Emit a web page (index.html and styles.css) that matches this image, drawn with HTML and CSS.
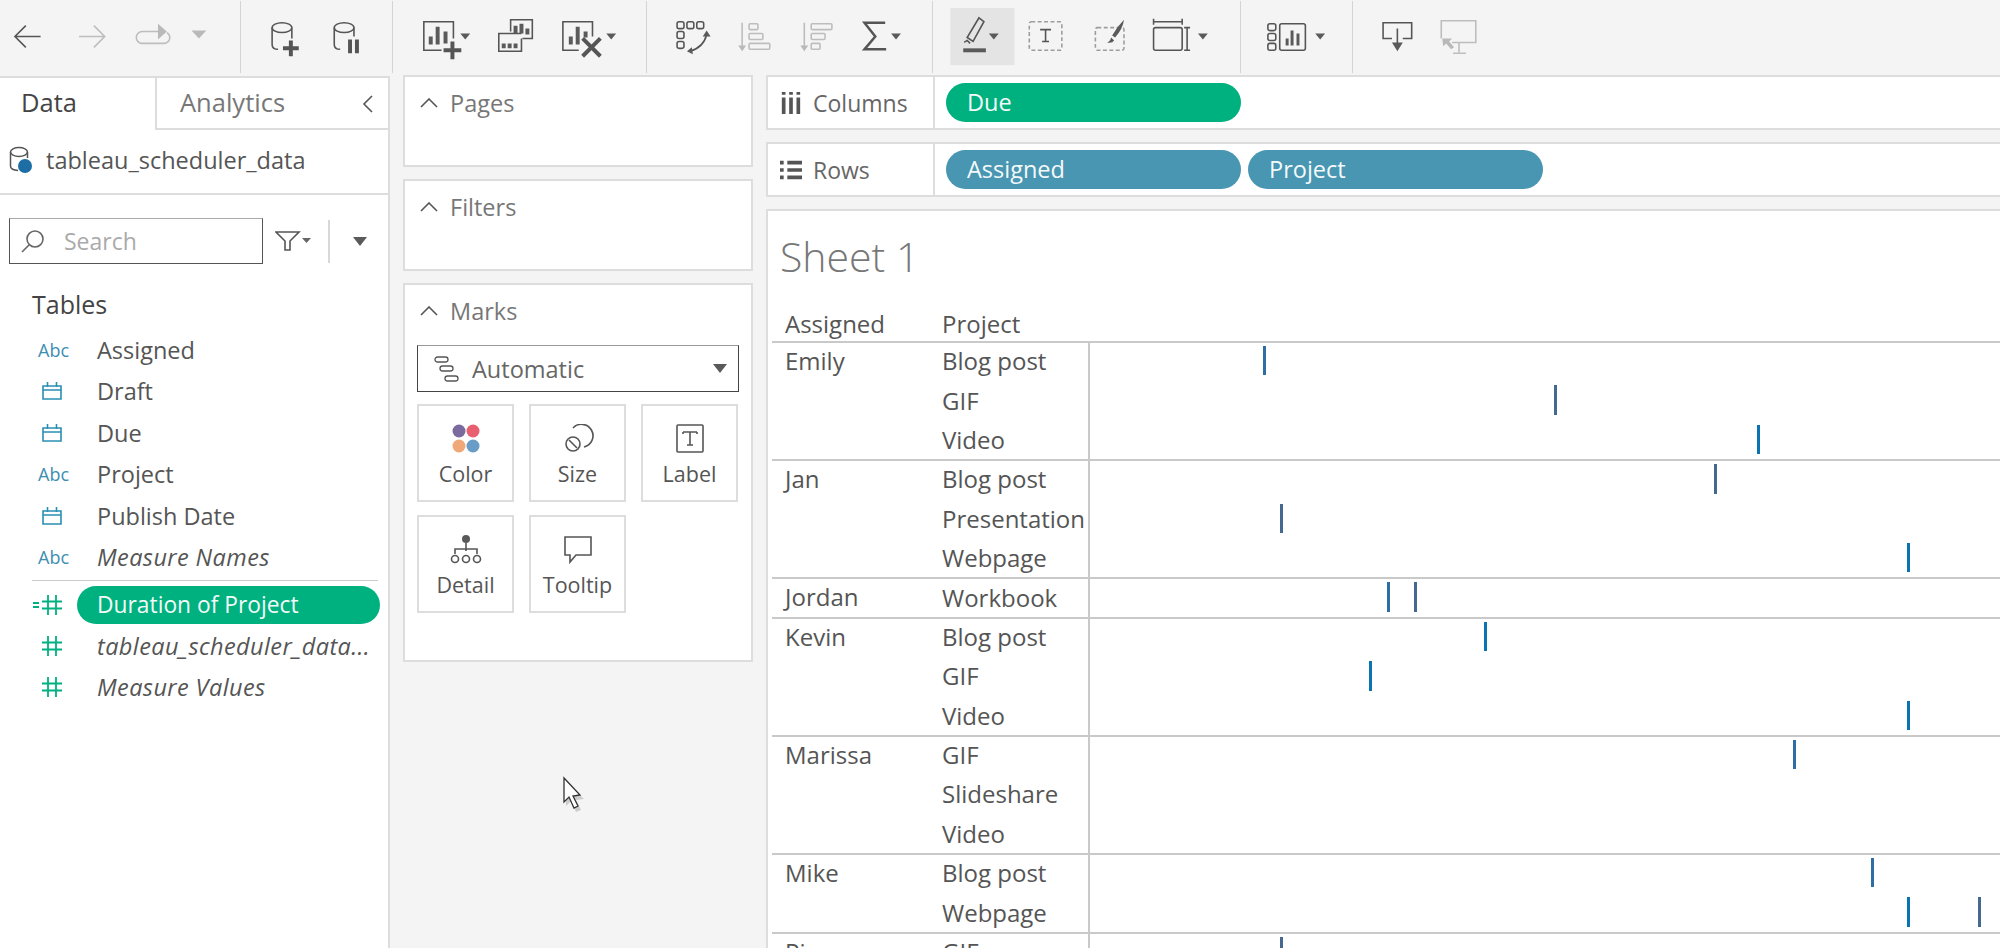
FILE: index.html
```html
<!DOCTYPE html>
<html lang="en">
<head>
  <meta charset="UTF-8">
  <title>Tableau - Sheet 1</title>
  <link rel="stylesheet" href="styles.css">
</head>
<body>

<div class="toolbar">
  <svg class="tb-group tb-history" viewBox="0 0 241 73">
    <g class="ln-dark"><path d="M40 36H15M25 25 14 36 25 47"/></g>
    <g class="ln-off"><path d="M79 36H104M94 25 105 36 94 47"/><path d="M160 31H143a6 6 0 0 0 0 12h22a6 6 0 0 0 6-6 6 6 0 0 0-3-5"/></g>
    <path class="fl-off" d="M159 23 168 31 159 39ZM193 30H208L200.500 38Z"/>
  </svg>
  <svg class="tb-group tb-data" viewBox="241 0 152 73">
    <g class="ln-dark">
      <ellipse cx="282" cy="27" rx="10" ry="5"/>
      <path d="M272 27V44Q272 49 278 49M292 27V38"/>
      <ellipse cx="345" cy="27" rx="10" ry="5"/>
      <path d="M335 27V44Q335 49 341 49M355 27V36"/>
    </g>
    <path class="ln-heavy" d="M291 40V56M283 48H299M351 39V53M358 39V53"/>
  </svg>
  <svg class="tb-group tb-sheet" viewBox="393 0 254 73">
    <g class="ln-dark">
      <path d="M441 50H423V21H453V38"/>
      <path d="M511 31V19H533V38H523"/>
      <path d="M522 33H499V51H522V38"/>
      <path d="M580 50H564V21H594V36"/>
    </g>
    <path class="fl-dark" d="M428 36h4v8h-4ZM435 26h4v18h-4ZM443 31h4v12h-4ZM514 25h4v8h-4ZM520 23h4v10h-4ZM526 28h4v6h-4ZM502 43h4v5h-4ZM508 43h4v5h-4ZM514 43h4v5h-4ZM570 36h4v8h-4ZM577 26h4v18h-4ZM585 31h4v6h-4Z"/>
    <path class="ln-heavy" d="M452 41V59M443 50H461M584 38 602 56M602 38 584 56"/>
    <path class="fl-dark" d="M460 33H470L465 39ZM608 33H618L613 39Z"/>
  </svg>
  <svg class="tb-group tb-analyze" viewBox="647 0 286 73">
    <g class="ln-dark">
      <rect x="676" y="21" width="7" height="7" rx="2"/><rect x="686" y="21" width="7" height="7" rx="2"/><rect x="696" y="21" width="7" height="7" rx="2"/>
      <rect x="676" y="31" width="7" height="7" rx="2"/><rect x="676" y="41" width="7" height="7" rx="2"/>
      <path d="M706 34Q703 47 689 51"/>
    </g>
    <path class="fl-dark" d="M702 36 706 30 710 36ZM691 47 686 51 692 54Z"/>
    <g class="ln-off">
      <path d="M742 22V46M805 22V46"/>
      <rect x="749" y="23" width="9" height="6" rx="1"/><rect x="749" y="33" width="14" height="6" rx="1"/><rect x="749" y="43" width="21" height="6" rx="1"/>
      <rect x="812" y="23" width="21" height="6" rx="1"/><rect x="812" y="33" width="14" height="6" rx="1"/><rect x="812" y="43" width="9" height="6" rx="1"/>
    </g>
    <path class="fl-off" d="M738 45H746L742 51ZM801 45H809L805 51Z"/>
    <path class="ln-sigma" d="M887 22H866L877 36 866 49H888"/>
    <path class="fl-dark" d="M893 33H903L898 39Z"/>
  </svg>
  <svg class="tb-group tb-format" viewBox="933 0 308 73">
    <rect class="fl-active" x="949" y="7" width="65" height="58"/>
    <g class="ln-dark">
      <path d="M978 17 983 21 972 41 966 37Z"/>
      <path d="M963 42 966 40 969 43"/>
      <path d="M1155 21H1184M1155 18V24M1184 18V24"/>
      <rect x="1155" y="27" width="29" height="23" rx="2"/>
      <path d="M1189 27V50M1186 27H1192M1186 50H1192"/>
      <path d="M1040 29H1051M1045.500 29V41M1042 41H1049"/>
    </g>
    <rect class="fl-dark" x="962" y="48" width="23" height="4"/>
    <rect class="ln-dash" x="1029" y="21" width="33" height="29" rx="2"/>
    <rect class="ln-dash" x="1096" y="27" width="29" height="23" rx="2"/>
    <path class="fl-dark" d="M1125 19Q1124 28 1116 37L1113 35Q1118 26 1125 19ZM1112 37 1115 40Q1113 43 1108 42Q1111 41 1112 37Z"/>
    <path class="fl-dark" d="M988 33H998L993 39ZM1200 33H1210L1205 39Z"/>
  </svg>
  <svg class="tb-group tb-showme" viewBox="1241 0 112 73">
    <g class="ln-dark">
      <rect x="1268" y="23" width="8" height="7" rx="2"/><rect x="1268" y="33" width="8" height="7" rx="2"/><rect x="1268" y="43" width="8" height="7" rx="2"/>
      <rect x="1280" y="23" width="26" height="27" rx="2"/>
    </g>
    <path class="fl-dark" d="M1286 38h3v7h-3ZM1291 30h3v15h-3ZM1297 33h3v12h-3ZM1316 33H1326L1321 39Z"/>
  </svg>
  <svg class="tb-group tb-share" viewBox="1356 0 647 73">
    <path class="ln-dark" d="M1391 38H1382V22H1411V38H1402M1396.500 28V44"/>
    <path class="fl-dark" d="M1391 42H1402L1396.500 51Z"/>
    <path class="ln-off" d="M1441 38V20H1476V42H1452M1459 42V52M1453 53H1466"/>
    <path class="fl-off" d="M1442 38H1452L1449 41 1454 47 1451 49 1446 43 1443 46Z"/>
  </svg>
</div>

<div class="workspace">

  <div class="side">
    <div class="tabs">
      <div class="tab">Data</div>
      <div class="tab tab-off">
        Analytics
        <svg class="tab-close" viewBox="0 0 12 20"><path d="M10 2 2 10 10 18"/></svg>
      </div>
    </div>

    <div class="source">
      <svg class="source-icon" viewBox="0 0 26 28">
        <ellipse cx="10" cy="6" rx="8.500" ry="4.500"/>
        <path d="M1.500 6V20Q1.500 24 9 24.500M18.500 6V12"/>
        <circle cx="16" cy="20" r="7"/>
      </svg>
      <span>tableau_scheduler_data</span>
    </div>

    <div class="search-row">
      <div class="search">
        <svg class="search-icon" viewBox="0 0 26 26"><circle cx="15" cy="11" r="8"/><path d="M9 17 2 24"/></svg>
        <span>Search</span>
      </div>
      <svg class="filter" viewBox="0 0 36 22">
        <path d="M1 2H24L15 11V20H10V11Z"/>
        <polygon points="27,8 36,8 31.500,13"/>
      </svg>
      <div class="search-sep"></div>
      <div class="caret"></div>
    </div>

    <div class="tables-title">Tables</div>

    <div class="field"><span class="abc">Abc</span><span>Assigned</span></div>
    <div class="field"><svg class="cal" viewBox="0 0 20 18"><path d="M1 4H19V17H1ZM1 8H19M5.500 0V5M14.500 0V5"/></svg><span>Draft</span></div>
    <div class="field"><svg class="cal" viewBox="0 0 20 18"><path d="M1 4H19V17H1ZM1 8H19M5.500 0V5M14.500 0V5"/></svg><span>Due</span></div>
    <div class="field"><span class="abc">Abc</span><span>Project</span></div>
    <div class="field"><svg class="cal" viewBox="0 0 20 18"><path d="M1 4H19V17H1ZM1 8H19M5.500 0V5M14.500 0V5"/></svg><span>Publish Date</span></div>
    <div class="field field-it"><span class="abc">Abc</span><span>Measure Names</span></div>
    <div class="field-sep"></div>
    <div class="field field-on">
      <svg class="hash hash-calc" viewBox="0 0 30 20"><path d="M0 8H6M0 12H6M9 6.500H29M9 13.500H29M15 0V20M23 0V20"/></svg>
      <span class="field-pill">Duration of Project</span>
    </div>
    <div class="field field-it"><svg class="hash" viewBox="0 0 20 20"><path d="M0 6.500H20M0 13.500H20M6 0V20M14 0V20"/></svg><span>tableau_scheduler_data...</span></div>
    <div class="field field-it"><svg class="hash" viewBox="0 0 20 20"><path d="M0 6.500H20M0 13.500H20M6 0V20M14 0V20"/></svg><span>Measure Values</span></div>
  </div>

  <div class="cards">
    <div class="card card-short">
      <div class="card-head"><svg class="chev" viewBox="0 0 18 10"><path d="M1 9 9 1 17 9"/></svg>Pages</div>
    </div>
    <div class="card card-short">
      <div class="card-head"><svg class="chev" viewBox="0 0 18 10"><path d="M1 9 9 1 17 9"/></svg>Filters</div>
    </div>
    <div class="card card-marks">
      <div class="card-head"><svg class="chev" viewBox="0 0 18 10"><path d="M1 9 9 1 17 9"/></svg>Marks</div>
      <div class="mark-select">
        <svg class="select-icon" viewBox="0 0 25 26">
          <rect x="1" y="1" width="13" height="5" rx="2.500"/>
          <rect x="6" y="10" width="13" height="5" rx="2.500"/>
          <rect x="11" y="20" width="13" height="5" rx="2.500"/>
        </svg>
        <span>Automatic</span>
        <div class="caret"></div>
      </div>
      <div class="mark-grid">
        <div class="mark-card">
          <svg class="mark-icon" viewBox="0 0 40 30">
            <circle class="dot-a" cx="13" cy="7" r="6.500"/><circle class="dot-b" cx="27" cy="7" r="6.500"/>
            <circle class="dot-c" cx="13" cy="22" r="6.500"/><circle class="dot-d" cx="27" cy="22" r="6.500"/>
          </svg>
          Color
        </div>
        <div class="mark-card">
          <svg class="mark-icon" viewBox="0 0 40 30"><path class="ln-dark" d="M15 4A11.500 11.500 0 1 1 26 23"/><circle class="ln-dark" cx="15" cy="20" r="7"/><path class="ln-dark" d="M11 16 19 24"/></svg>
          Size
        </div>
        <div class="mark-card">
          <svg class="mark-icon" viewBox="0 0 40 30"><rect class="ln-dark" x="7" y="1" width="26" height="27" rx="1"/><path class="ln-dark" d="M13 8H27M13 8V10M27 8V10M20 8V21M17 21H23"/></svg>
          Label
        </div>
        <div class="mark-card">
          <svg class="mark-icon" viewBox="0 0 40 30">
            <circle class="fl-dark" cx="20" cy="4" r="4"/>
            <path class="ln-dark" d="M20 8V16M9 19V14H31V19"/>
            <circle class="ln-dark" cx="9" cy="24" r="3.500"/><circle class="ln-dark" cx="20" cy="24" r="3.500"/><circle class="ln-dark" cx="31" cy="24" r="3.500"/>
          </svg>
          Detail
        </div>
        <div class="mark-card">
          <svg class="mark-icon" viewBox="0 0 40 30"><path class="ln-dark" d="M7 2H33V20H18L12 27V20H7Z"/></svg>
          Tooltip
        </div>
      </div>
    </div>
  </div>

  <div class="view">
    <div class="shelf">
      <div class="shelf-label">
        <svg class="shelf-icon" viewBox="0 0 22 24"><path d="M3 0V3M3 6V24M11 0V3M11 6V24M19 0V3M19 6V24"/></svg>
        Columns
      </div>
      <div class="pill pill-date">Due</div>
    </div>
    <div class="shelf">
      <div class="shelf-label">
        <svg class="shelf-icon" viewBox="0 0 24 20"><path d="M0 2H4M8 2H24M0 10H4M8 10H24M0 18H4M8 18H24"/></svg>
        Rows
      </div>
      <div class="pill pill-dim">Assigned</div>
      <div class="pill pill-dim">Project</div>
    </div>

    <div class="sheet">
      <div class="sheet-title">Sheet 1</div>
      <div class="viz-head"><div class="col-name">Assigned</div><div>Project</div></div>

      <div class="group">
        <div class="col-name">Emily</div>
        <div class="rows">
          <div class="row"><div class="col-proj">Blog post</div><div class="track"><i class="tick t1" style="left:173px"></i></div></div>
          <div class="row"><div class="col-proj">GIF</div><div class="track"><i class="tick t2" style="left:464px"></i></div></div>
          <div class="row"><div class="col-proj">Video</div><div class="track"><i class="tick t3" style="left:667px"></i></div></div>
        </div>
      </div>
      <div class="group">
        <div class="col-name">Jan</div>
        <div class="rows">
          <div class="row"><div class="col-proj">Blog post</div><div class="track"><i class="tick t2" style="left:624px"></i></div></div>
          <div class="row"><div class="col-proj">Presentation</div><div class="track"><i class="tick t2" style="left:190px"></i></div></div>
          <div class="row"><div class="col-proj">Webpage</div><div class="track"><i class="tick t3" style="left:817px"></i></div></div>
        </div>
      </div>
      <div class="group">
        <div class="col-name">Jordan</div>
        <div class="rows">
          <div class="row"><div class="col-proj">Workbook</div><div class="track"><i class="tick t1" style="left:297px"></i><i class="tick t2" style="left:324px"></i></div></div>
        </div>
      </div>
      <div class="group">
        <div class="col-name">Kevin</div>
        <div class="rows">
          <div class="row"><div class="col-proj">Blog post</div><div class="track"><i class="tick t3" style="left:394px"></i></div></div>
          <div class="row"><div class="col-proj">GIF</div><div class="track"><i class="tick t3" style="left:279px"></i></div></div>
          <div class="row"><div class="col-proj">Video</div><div class="track"><i class="tick t3" style="left:817px"></i></div></div>
        </div>
      </div>
      <div class="group">
        <div class="col-name">Marissa</div>
        <div class="rows">
          <div class="row"><div class="col-proj">GIF</div><div class="track"><i class="tick t1" style="left:703px"></i></div></div>
          <div class="row"><div class="col-proj">Slideshare</div><div class="track"></div></div>
          <div class="row"><div class="col-proj">Video</div><div class="track"></div></div>
        </div>
      </div>
      <div class="group">
        <div class="col-name">Mike</div>
        <div class="rows">
          <div class="row"><div class="col-proj">Blog post</div><div class="track"><i class="tick t1" style="left:781px"></i></div></div>
          <div class="row"><div class="col-proj">Webpage</div><div class="track"><i class="tick t3" style="left:817px"></i><i class="tick t2" style="left:888px"></i></div></div>
        </div>
      </div>
      <div class="group">
        <div class="col-name">Pierre</div>
        <div class="rows">
          <div class="row"><div class="col-proj">GIF</div><div class="track"><i class="tick t2" style="left:190px"></i></div></div>
        </div>
      </div>
    </div>
  </div>
</div>

<svg class="pointer" viewBox="0 0 24 36">
  <path class="pointer-shade" d="M4 6V30L9 25 14 36 19 34 14 24 22 23Z"/>
  <path class="pointer-arrow" d="M2 2V26L7 21 12 32 16 30 11 20 18 19Z"/>
</svg>

</body>
</html>
```

FILE: styles.css
```css
html, body {
  height: 100%;
  overflow: hidden;
}

body {
  position: relative;
  margin: 0;
  background-color: #f4f4f4;
  color: #555;
  font-family: "Open Sans", sans-serif;
  font-size: 23.500px;
}

/* toolbar */
.toolbar {
  display: flex;
  height: 73px;
  margin-bottom: 3px;
}

.tb-group {
  display: block;
  height: 72px;
  margin-top: 1px;
  flex-shrink: 0;
  box-sizing: border-box;
  border-right: 1px solid #d4d4d4;
}

.tb-history { width: 241px; }
.tb-data { width: 152px; }
.tb-sheet { width: 254px; }
.tb-analyze { width: 286px; }
.tb-format { width: 308px; }
.tb-showme { width: 112px; }
.tb-share { width: 647px; border-right: none; }

.ln-dark, .ln-dark * { fill: none; stroke: #555; stroke-width: 1.6; }
.ln-off, .ln-off * { fill: none; stroke: #bdbdbd; stroke-width: 1.6; }
.ln-heavy { fill: none; stroke: #555; stroke-width: 4; }
.ln-sigma { fill: none; stroke: #555; stroke-width: 2.5; }
.ln-dash { fill: none; stroke: #9d9d9d; stroke-width: 1.6; stroke-dasharray: 4 2.500; }
.fl-dark { fill: #5a5a5a; }
.fl-off { fill: #b9b9b9; }
.fl-active { fill: #e4e4e4; }

/* main area */
.workspace {
  display: flex;
  height: 872px;
}

.side {
  width: 390px;
  flex-shrink: 0;
  box-sizing: border-box;
  background-color: #fff;
  border-top: 2px solid #ddd;
  border-right: 2px solid #ddd;
}

.tabs {
  display: flex;
  height: 52px;
}

.tab {
  width: 155px;
  padding-left: 21px;
  box-sizing: border-box;
  line-height: 48px;
  font-size: 25.500px;
  color: #444;
}

.tab-off {
  position: relative;
  flex: 1;
  padding-left: 23px;
  border-left: 2px solid #ddd;
  border-bottom: 2px solid #ddd;
  color: #777;
}

.tab-close {
  position: absolute;
  top: 16px;
  right: 14px;
  width: 12px;
  height: 20px;
  fill: none;
  stroke: #555;
  stroke-width: 1.6;
}

.source {
  display: flex;
  align-items: center;
  height: 60px;
  padding: 0 0 3px 9px;
  border-bottom: 2px solid #ddd;
  gap: 11px;
}

.source-icon {
  width: 26px;
  height: 28px;
  fill: none;
  stroke: #555;
  stroke-width: 1.5;
}

.source-icon circle {
  fill: #1c6ea4;
  stroke: none;
}

.search-row {
  display: flex;
  align-items: center;
  height: 46px;
  margin-top: 23px;
  padding-left: 9px;
}

.search {
  display: flex;
  align-items: center;
  width: 254px;
  height: 46px;
  box-sizing: border-box;
  border: 1px solid #555;
  border-top-color: #aaa;
  color: #aaa;
  font-size: 23px;
}

.search-icon {
  width: 26px;
  height: 26px;
  margin: 0 18px 0 10px;
  fill: none;
  stroke: #666;
  stroke-width: 1.6;
}

.filter {
  width: 36px;
  height: 22px;
  margin-left: 12px;
  fill: none;
  stroke: #555;
  stroke-width: 1.6;
}

.filter polygon {
  fill: #666;
  stroke: none;
}

.search-sep {
  width: 2px;
  height: 43px;
  margin: 0 23px 0 17px;
  background-color: #d8d8d8;
}

.caret {
  width: 0;
  height: 0;
  border-top: 9px solid #5a5a5a;
  border-left: 7px solid transparent;
  border-right: 7px solid transparent;
}

.tables-title {
  height: 45px;
  margin-top: 20px;
  padding-left: 32px;
  line-height: 40px;
  font-size: 25px;
  color: #444;
}

.field {
  display: flex;
  align-items: center;
  height: 41.500px;
  padding-left: 97px;
  position: relative;
}

.field-it {
  font-style: italic;
  letter-spacing: 0.400px;
}

.abc, .cal, .hash {
  position: absolute;
}

.abc {
  left: 38px;
  font-size: 18px;
  color: #3d8eb0;
  font-style: normal;
  letter-spacing: 0;
}

.cal {
  left: 42px;
  width: 20px;
  height: 18px;
  fill: none;
  stroke: #2b8fb3;
  stroke-width: 1.6;
}

.hash {
  left: 42px;
  width: 20px;
  height: 20px;
  fill: none;
  stroke: #00b180;
  stroke-width: 1.8;
}

.hash-calc {
  left: 33px;
  width: 30px;
}

.field-sep {
  height: 1px;
  margin: 2px 10px 5px 32px;
  background-color: #ccc;
}

.field-on {
  height: 38px;
  margin-bottom: 1px;
}

.field-pill {
  position: absolute;
  left: 77px;
  width: 303px;
  box-sizing: border-box;
  padding-left: 20px;
  line-height: 38px;
  font-size: 22.800px;
  border-radius: 19px;
  background-color: #00b180;
  color: #f2fbf8;
}

/* pages, filters, marks */
.cards {
  width: 350px;
  flex-shrink: 0;
  margin: -1px 13px 0 13px;
}

.card {
  box-sizing: border-box;
  background-color: #fff;
  border: 2px solid #ddd;
  margin-bottom: 12px;
}

.card-short {
  height: 92px;
}

.card-short .card-head {
  height: 52px;
}

.card-marks {
  height: 379px;
}

.card-head {
  display: flex;
  align-items: center;
  gap: 12px;
  height: 51px;
  padding-left: 15px;
  color: #777;
}

.chev {
  width: 18px;
  height: 10px;
  fill: none;
  stroke: #555;
  stroke-width: 1.6;
}

.mark-select {
  display: flex;
  align-items: center;
  height: 47px;
  margin: 9px 12px 12px 12px;
  padding: 0 11px 0 16px;
  box-sizing: border-box;
  border: 1px solid #444;
  border-top-color: #999;
  color: #666;
}

.select-icon {
  width: 25px;
  height: 26px;
  margin-right: 13px;
  fill: none;
  stroke: #555;
  stroke-width: 1.3;
}

.mark-select .caret {
  margin-left: auto;
}

.mark-grid {
  display: grid;
  grid-template-columns: repeat(3, 97px);
  grid-auto-rows: 98px;
  column-gap: 15px;
  row-gap: 13px;
  margin: 0 12px;
}

.mark-card {
  display: flex;
  flex-direction: column;
  align-items: center;
  box-sizing: border-box;
  padding-top: 18px;
  border: 2px solid #ddd;
  line-height: 40px;
  font-size: 21.500px;
}

.mark-icon {
  width: 40px;
  height: 30px;
  flex-shrink: 0;
}

.dot-a { fill: #7a6a9d; }
.dot-b { fill: #e8606f; }
.dot-c { fill: #f0a878; }
.dot-d { fill: #6a9cc8; }

/* shelves and viz */
.view {
  flex: 1;
  min-width: 0;
  margin-top: -1px;
}

.shelf {
  display: flex;
  align-items: center;
  height: 55px;
  margin-bottom: 12px;
  box-sizing: border-box;
  background-color: #fff;
  border: 2px solid #ddd;
  border-right: none;
  gap: 7px;
}

.shelf-label {
  display: flex;
  align-items: center;
  gap: 11px;
  width: 167px;
  height: 100%;
  margin-right: 4px;
  padding-left: 12px;
  box-sizing: border-box;
  border-right: 2px solid #ddd;
  color: #666;
  font-size: 23px;
}

.shelf-icon {
  width: 22px;
  height: 22px;
  flex-shrink: 0;
  fill: none;
  stroke: #555;
  stroke-width: 4;
}

.pill {
  width: 295px;
  box-sizing: border-box;
  padding-left: 21px;
  line-height: 39px;
  border-radius: 20px;
  color: #f4fafa;
}

.pill-date { background-color: #00b180; }
.pill-dim { background-color: #4996b2; }

.sheet {
  height: 739px;
  margin-top: 1px;
  overflow: hidden;
  box-sizing: border-box;
  background-color: #fff;
  border-top: 2px solid #ddd;
  border-left: 2px solid #ddd;
}

.sheet-title {
  height: 85px;
  padding: 17px 0 0 12px;
  box-sizing: border-box;
  line-height: 56px;
  font-size: 41px;
  font-weight: 300;
  color: #777;
}

.viz-head {
  display: flex;
  height: 45px;
  margin-left: 4px;
  line-height: 55px;
  font-size: 24px;
}

.group {
  display: flex;
  margin-left: 4px;
  box-shadow: inset 0 2px 0 #c9c9c9;
  font-size: 24px;
}

.viz-head .col-name,
.group .col-name {
  width: 170px;
  flex-shrink: 0;
  box-sizing: border-box;
  padding-left: 13px;
  line-height: 39px;
}

.viz-head .col-name {
  line-height: 55px;
}

.rows {
  flex: 1;
  min-width: 0;
}

.row {
  display: flex;
  align-items: center;
  height: 39.400px;
}

.col-proj {
  width: 146px;
  flex-shrink: 0;
  white-space: nowrap;
}

.track {
  position: relative;
  flex: 1;
  height: 100%;
  border-left: 2px solid #c9c9c9;
}

.tick {
  position: absolute;
  top: 5px;
  bottom: 5px;
  width: 3px;
}

.t1 { background-color: #2f6ea5; }
.t2 { background-color: #44688f; }
.t3 { background-color: #0a74b3; }

/* mouse cursor in the capture */
.pointer {
  position: absolute;
  left: 562px;
  top: 776px;
  width: 24px;
  height: 36px;
}

.pointer-shade { fill: #ccc; }
.pointer-arrow { fill: #fff; stroke: #333; stroke-width: 1.3; }
```
